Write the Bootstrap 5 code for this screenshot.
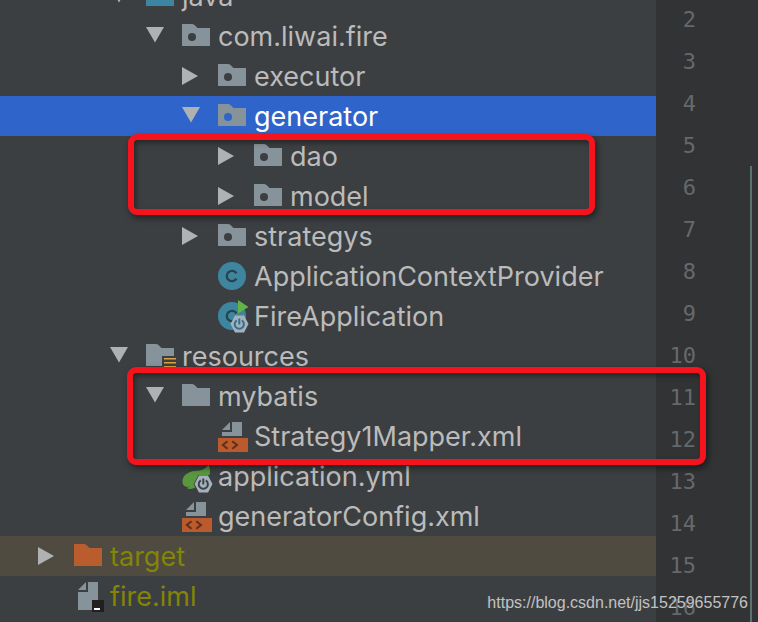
<!DOCTYPE html>
<html lang="en" data-bs-theme="dark">
<head>
<meta charset="utf-8">
<meta name="viewport" content="width=device-width, initial-scale=1">
<title>Project tree</title>
<link href="https://cdn.jsdelivr.net/npm/bootstrap@5.3.0/dist/css/bootstrap.min.css" rel="stylesheet">
<style>
  body { background: #3c3f41; font-family: Inter, "Noto Sans", sans-serif; }
  .tree { margin-top: -24px; }
  .tree-row { height: 40px; font-size: 27px; line-height: 40px; padding-top: 1px; color: #bbbbbb; white-space: nowrap; }
  .tree-row svg { display: block; flex: none; width: 36px; height: 40px; margin-top: -1px; }
  .tree-row button, .leaf-gap { width: 36px; height: 40px; flex: none; }
  .lv-0 { padding-left: 38px; }
  .lv-2 { padding-left: 110px; }
  .lv-3 { padding-left: 146px; }
  .lv-4 { padding-left: 182px; }
  .lv-5 { padding-left: 218px; }
  .row-selected { background: #2f65ca; color: #ffffff; --hole: #2f65ca; }
  .row-excluded { background: #4f4b41; }
  .text-ignored { color: #848504; }
  .gutter { width: 102px; background: #313335; }
  .line-numbers { width: 40px; margin-top: -1px; font: 22px/42px "DejaVu Sans Mono", monospace; color: #66696c; }
  .change-bar { width: 2px; margin: 166px 6px 0 0; background: #587370; }
  .callout { border: 6px solid #f5131e; border-radius: 9px; box-shadow: 2px 3px 6px rgba(0,0,0,.5), inset 2px 3px 5px rgba(0,0,0,.4); pointer-events: none; }
  .callout-packages { left: 128px; top: 134px; width: 467px; height: 81px; }
  .callout-mapper { left: 127px; top: 367px; width: 579px; height: 98px; }
  .watermark { right: 10px; bottom: 7px; font: 16px/24px "Liberation Sans", Arial, sans-serif; color: #c2c2c2; }
</style>
<script src="https://cdn.jsdelivr.net/npm/bootstrap@5.3.0/dist/js/bootstrap.bundle.min.js"></script>
</head>
<body>
<svg class="d-none" aria-hidden="true">
  <symbol id="open" viewBox="0 0 36 40"><path d="M0 10h18L9 25.500z" fill="#afb1b3"/></symbol>
  <symbol id="closed" viewBox="0 0 36 40"><path d="M0 10v18l16-9z" fill="#afb1b3"/></symbol>
  <symbol id="folder" viewBox="0 0 36 40"><path d="M0 8h10q1.500 0 2.500 1l3 3H28v18H0z" fill="currentColor"/></symbol>
  <symbol id="package" viewBox="0 0 36 40"><path d="M0 8h10q1.500 0 2.500 1l3 3H28v18H0z" fill="#87939a"/><circle cx="10" cy="21" r="4" style="fill:var(--hole,#3c3f41)"/></symbol>
  <symbol id="resources" viewBox="0 0 36 40"><path d="M0 8h10q1.500 0 2.500 1l3 3H28v8H16v10H0z" fill="#87939a"/><path d="M18 22.700h12M18 26.700h12M18 30.700h12" stroke="#d9a343" stroke-width="1.600"/></symbol>
  <symbol id="class" viewBox="0 0 36 40"><circle cx="14" cy="20" r="14" fill="#3e86a0"/><path d="M18.400 17.300a5.200 5.200 0 1 0 0 5.400" fill="none" stroke="#28424e" stroke-width="2.300"/></symbol>
  <symbol id="boot" viewBox="0 0 36 40"><path d="M17 19.500h9l4.500 8.500-4.500 8.500h-9L12.500 28z" fill="#a5b1bc"/><path d="M18.800 24.300a4.600 4.600 0 1 0 5 0M21.300 22.500v6" fill="none" stroke="currentColor" stroke-width="2"/></symbol>
  <symbol id="app" viewBox="0 0 36 40"><circle cx="14" cy="20" r="14" fill="#3e86a0"/><path d="M18.400 17.300a5.200 5.200 0 1 0 0 5.400" fill="none" stroke="#28424e" stroke-width="2.300"/><path d="M20 4v13.500L30.500 11z" fill="#62b543"/><use href="#boot" width="36" height="40" color="#34708c"/></symbol>
  <symbol id="xml" viewBox="0 0 36 40"><path d="M4 14l8-8v8zM14 6h10v14H4v-4h10z" fill="#87939a"/><path d="M0 22h30v14H0z" fill="#bb5a2c"/><path d="M9.500 25.200L4.800 29l4.700 3.800M14.300 25.200L19 29l-4.700 3.800" fill="none" stroke="#5c2e1b" stroke-width="1.900"/></symbol>
  <symbol id="yml" viewBox="0 0 36 40"><path d="M26.500 8.500q2.500 6 1 10.500H16.500L11.500 28l1.800 3.500Q9 34 4.500 32l4-1.500Q3 32 1 28.500C-1.500 21 5 15.500 13 15c7-.5 11-2 13.500-6.500z" fill="#58983f"/><use href="#boot" width="36" height="40" color="#3c4348"/></symbol>
  <symbol id="iml" viewBox="0 0 36 40"><path d="M4 14l8-8v8zM14 6h10v28H4V16h10z" fill="#87939a"/><path d="M18 24h12v12H18z" fill="#231f20"/><path d="M20 32h6v2h-6z" fill="#fff"/></symbol>
</svg>
<div class="position-relative vh-100 overflow-hidden">
  <main class="d-flex h-100">
    <ul class="tree list-unstyled flex-fill mb-0" aria-label="Project files">
      <li class="tree-row d-flex lv-2"><button class="btn p-0 border-0" aria-label="Collapse java"><svg><use href="#open"/></svg></button><svg color="#3e86a0"><use href="#folder"/></svg><span>java</span></li>
      <li class="tree-row d-flex lv-3"><button class="btn p-0 border-0" aria-label="Collapse com.liwai.fire"><svg><use href="#open"/></svg></button><svg><use href="#package"/></svg><span>com.liwai.fire</span></li>
      <li class="tree-row d-flex lv-4"><button class="btn p-0 border-0" aria-label="Expand executor"><svg><use href="#closed"/></svg></button><svg><use href="#package"/></svg><span>executor</span></li>
      <li class="tree-row d-flex lv-4 row-selected"><button class="btn p-0 border-0" aria-label="Collapse generator"><svg><use href="#open"/></svg></button><svg><use href="#package"/></svg><span>generator</span></li>
      <li class="tree-row d-flex lv-5"><button class="btn p-0 border-0" aria-label="Expand dao"><svg><use href="#closed"/></svg></button><svg><use href="#package"/></svg><span>dao</span></li>
      <li class="tree-row d-flex lv-5"><button class="btn p-0 border-0" aria-label="Expand model"><svg><use href="#closed"/></svg></button><svg><use href="#package"/></svg><span>model</span></li>
      <li class="tree-row d-flex lv-4"><button class="btn p-0 border-0" aria-label="Expand strategys"><svg><use href="#closed"/></svg></button><svg><use href="#package"/></svg><span>strategys</span></li>
      <li class="tree-row d-flex lv-4"><span class="leaf-gap"></span><svg><use href="#class"/></svg><span>ApplicationContextProvider</span></li>
      <li class="tree-row d-flex lv-4"><span class="leaf-gap"></span><svg><use href="#app"/></svg><span>FireApplication</span></li>
      <li class="tree-row d-flex lv-2"><button class="btn p-0 border-0" aria-label="Collapse resources"><svg><use href="#open"/></svg></button><svg><use href="#resources"/></svg><span>resources</span></li>
      <li class="tree-row d-flex lv-3"><button class="btn p-0 border-0" aria-label="Collapse mybatis"><svg><use href="#open"/></svg></button><svg color="#87939a"><use href="#folder"/></svg><span>mybatis</span></li>
      <li class="tree-row d-flex lv-4"><span class="leaf-gap"></span><svg><use href="#xml"/></svg><span>Strategy1Mapper.xml</span></li>
      <li class="tree-row d-flex lv-3"><span class="leaf-gap"></span><svg><use href="#yml"/></svg><span>application.yml</span></li>
      <li class="tree-row d-flex lv-3"><span class="leaf-gap"></span><svg><use href="#xml"/></svg><span>generatorConfig.xml</span></li>
      <li class="tree-row d-flex lv-0 row-excluded"><button class="btn p-0 border-0" aria-label="Expand target"><svg><use href="#closed"/></svg></button><svg color="#b95c2e"><use href="#folder"/></svg><span class="text-ignored">target</span></li>
      <li class="tree-row d-flex lv-0"><span class="leaf-gap"></span><svg><use href="#iml"/></svg><span class="text-ignored">fire.iml</span></li>
    </ul>
    <aside class="gutter d-flex justify-content-between flex-shrink-0" aria-label="Editor gutter">
      <div class="line-numbers text-end">
        <div>2</div><div>3</div><div>4</div><div>5</div><div>6</div><div>7</div><div>8</div><div>9</div>
        <div>10</div><div>11</div><div>12</div><div>13</div><div>14</div><div>15</div><div>16</div>
      </div>
      <div class="change-bar"></div>
    </aside>
  </main>
  <div class="callout callout-packages position-absolute"></div>
  <div class="callout callout-mapper position-absolute"></div>
  <div class="watermark position-absolute">https://blog.csdn.net/jjs15259655776</div>
</div>
</body>
</html>
